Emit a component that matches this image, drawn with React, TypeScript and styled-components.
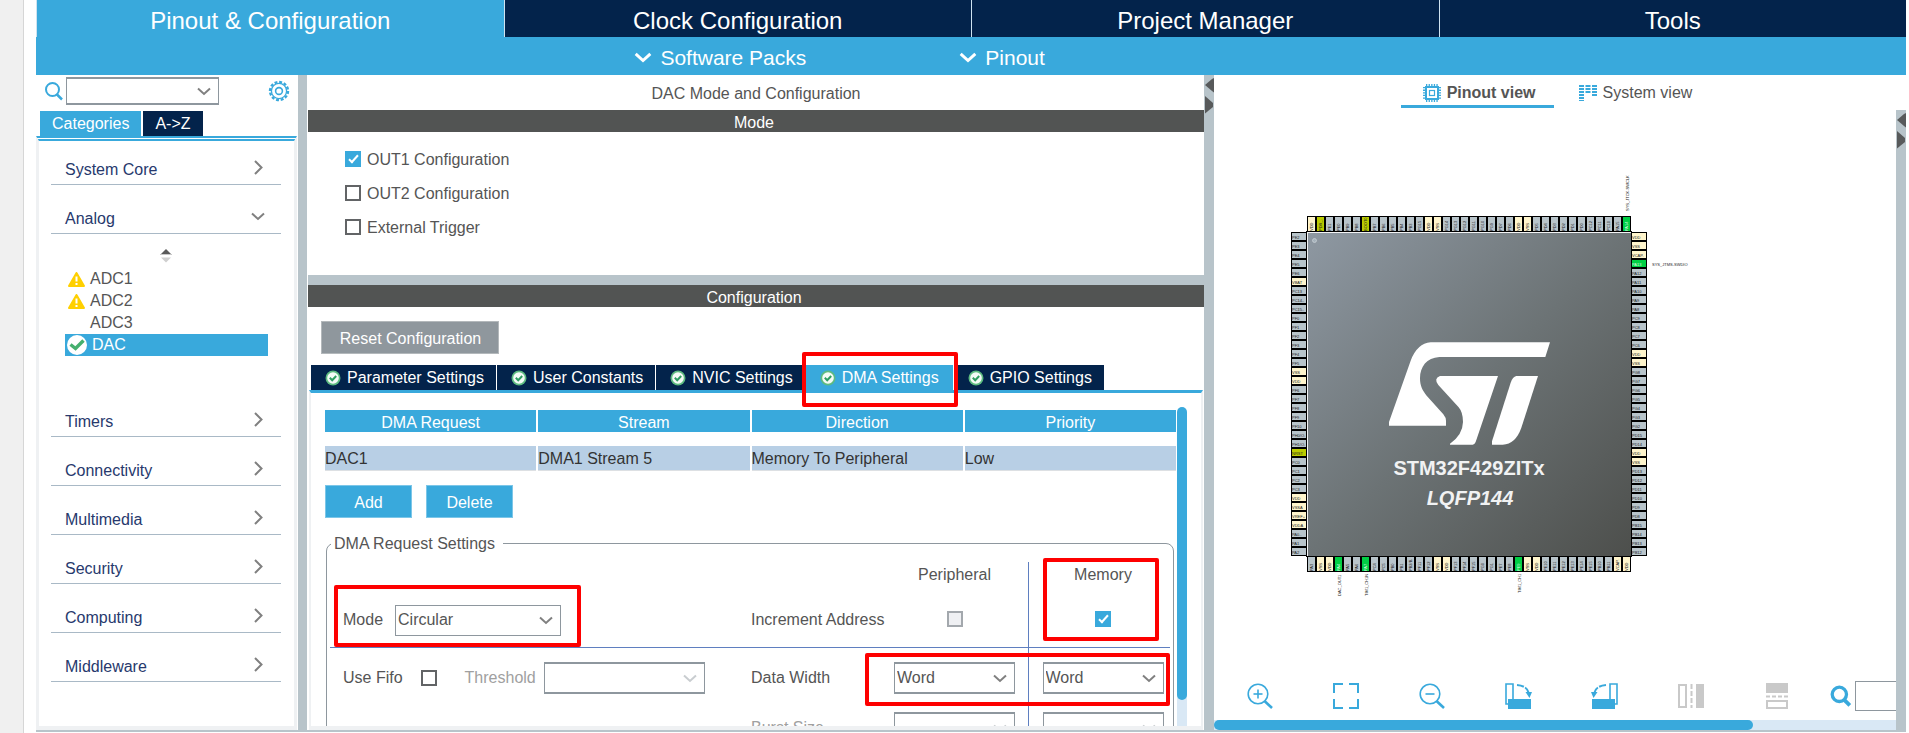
import React from 'react';
import styled, { createGlobalStyle, css } from 'styled-components';

const c = {
  navy: '#03234b',
  blue: '#39a9dc',
  steel: '#b8c4ca',
  slate: '#8e979e',
  dark: '#525453',
  text: '#555555',
  pale: '#eff1f3',
  track: '#d9e8f5',
  rule: '#5f7fc0',
};

const GlobalStyle = createGlobalStyle`
  *, *::before, *::after { box-sizing: border-box; }
  body {
    margin: 0;
    background: #fff;
    color: ${c.text};
    font: 16px/20px "Liberation Sans", Arial, sans-serif;
  }
  button, input, select { font: inherit; color: inherit; margin: 0; }
  button { border: 0; padding: 0; background: none; cursor: pointer; }
`;

/* ---------- frame ---------- */

const Page = styled.div`
  display: flex;
  height: 100vh;
  overflow: hidden;
`;

const Gutter = styled.div`
  flex: 0 0 24px;
  background: #f0f0f0;
  border-right: 1px solid #d6d6d6;
`;

const Shell = styled.div`
  flex: 1;
  min-width: 0;
  display: flex;
  flex-direction: column;
  margin: 0 3px 1px 12px;
`;

const MainTabs = styled.nav`
  display: grid;
  grid-template-columns: repeat(4, 1fr);
  height: 37px;
`;

const MainTab = styled.button<{ $active?: boolean }>`
  background: ${(p) => (p.$active ? c.blue : c.navy)};
  color: #fff;
  font-size: 24px;
  line-height: 28px;
  padding-top: 4px;
  border-left: 1px solid #cfe3f0;
`;

const SubBar = styled.div`
  display: flex;
  align-items: center;
  gap: 153px;
  height: 38px;
  padding-left: 32%;
  background: ${c.blue};
`;

const SubBarButton = styled.button`
  display: flex;
  align-items: center;
  gap: 8px;
  color: #fff;
  font-size: 21px;
  line-height: 24px;
  padding-top: 3px;
`;

const Workspace = styled.main`
  flex: 1;
  min-height: 0;
  display: grid;
  grid-template-columns: 262px 9px minmax(0, 897fr) 10px minmax(0, 692fr);
  border-bottom: 2px solid ${c.steel};
`;

const Splitter = styled.div`
  background: ${c.steel};
`;

/* ---------- shared controls ---------- */

const SelectBox = styled.span<{ $w: number; $h: number; $thick?: boolean }>`
  display: inline-grid;
  align-items: center;
  width: ${(p) => p.$w}px;
  height: ${(p) => p.$h}px;
  border: 1px solid ${c.slate};
  ${(p) => p.$thick && css`border-width: 2px 1px;`}
  background: #fff;

  > * { grid-area: 1 / 1; }
  > svg { justify-self: end; margin-right: 7px; pointer-events: none; }
`;

const NativeSelect = styled.select`
  appearance: none;
  width: 100%;
  height: 100%;
  border: 0;
  padding: 0 24px 0 2px;
  background: transparent;
  outline: none;
  opacity: 1;
`;

const Check = styled.input.attrs({ type: 'checkbox' })`
  appearance: none;
  flex: none;
  display: grid;
  place-items: center;
  width: 16px;
  height: 16px;
  border: 2px solid #626466;
  background: #fff;

  &:checked {
    background: ${c.blue};
    border-color: ${c.blue};
  }
  &:checked::after {
    content: '';
    width: 5px;
    height: 10px;
    border: solid #fff;
    border-width: 0 2px 2px 0;
    transform: translateY(-1px) rotate(42deg);
  }
  &:disabled {
    background: #eff0f3;
    border-color: #a3a8ad;
  }
`;

const Highlight = styled.span<{ $inset: string; $w?: number; $h?: number }>`
  position: absolute;
  z-index: 2;
  inset: ${(p) => p.$inset};
  ${(p) => p.$w && css`width: ${p.$w}px;`}
  ${(p) => p.$h && css`height: ${p.$h}px;`}
  border: 4px solid #fe0000;
  border-radius: 2px;
  pointer-events: none;
`;

const Chevron = ({ color = '#808080', size = 14, weight = 2 }: { color?: string; size?: number; weight?: number }) => (
  <svg width={size} height={size / 2 + 2} viewBox="0 0 14 9" fill="none" stroke={color} strokeWidth={weight}>
    <path d="M1 1.5 L7 7 L13 1.5" />
  </svg>
);

function Dropdown({ id, w, h, options, disabled, thick, label }: {
  id: string; w: number; h: number; options: string[]; disabled?: boolean; thick?: boolean; label?: string;
}) {
  return (
    <SelectBox $w={w} $h={h} $thick={thick}>
      <NativeSelect id={id} disabled={disabled} aria-label={label}>
        {options.map((o) => <option key={o}>{o}</option>)}
      </NativeSelect>
      <Chevron color={disabled ? '#c9cdd0' : '#808080'} />
    </SelectBox>
  );
}

const SearchIcon = ({ size = 20, weight = 2 }: { size?: number; weight?: number }) => (
  <svg width={size} height={size} viewBox="0 0 20 20" fill="none" stroke={c.blue} strokeWidth={weight}>
    <circle cx="8.5" cy="8.5" r="6.5" />
    <path d="M12.5 13 L18 18.5" strokeWidth={weight + 0.5} />
  </svg>
);

/* ---------- sidebar ---------- */

const Sidebar = styled.aside`
  display: flex;
  flex-direction: column;
  min-height: 0;
`;

const SearchRow = styled.div`
  display: flex;
  align-items: center;
  gap: 2px;
  height: 32px;
  padding-left: 8px;
  > button { margin-left: auto; margin-right: 8px; height: 22px; }
`;

const SideTabs = styled.div`
  display: flex;
  gap: 2px;
  height: 29px;
  padding: 4px 0 0 4px;
`;

const SideTab = styled.button<{ $active?: boolean }>`
  background: ${(p) => (p.$active ? c.blue : c.navy)};
  color: #fff;
  height: 25px;
  padding: 0 12px;
`;

const SideBody = styled.div`
  flex: 1;
  min-height: 0;
  overflow: hidden;
  margin-right: 1px;
  border: 3px solid ${c.pale};
  border-top: 5px double ${c.blue};
  border-bottom: 4px solid ${c.pale};
`;

const CategoryList = styled.ul`
  list-style: none;
  margin: 0;
  padding: 8px 13px 0 12px;
  display: flex;
  flex-direction: column;
  gap: 13px;
`;

const CategoryButton = styled.button`
  display: flex;
  align-items: center;
  justify-content: space-between;
  width: 100%;
  height: 36px;
  padding: 6px 16px 0 14px;
  border-bottom: 1px solid #a9b9c6;
  color: #27396d;
  > svg { margin-bottom: 4px; }
`;

const Tree = styled.ul`
  list-style: none;
  margin: 0;
  padding: 0 13px 0 14px;
  height: 154px;
`;

const Sorter = styled.li`
  display: flex;
  justify-content: center;
  height: 34px;
  padding: 14px 2px 0 0;
`;

const TreeButton = styled.button<{ $selected?: boolean }>`
  display: grid;
  grid-template-columns: ${(p) => (p.$selected ? '22px' : '20px')} auto;
  align-items: center;
  column-gap: 4px;
  width: 100%;
  height: 22px;
  padding-left: 1px;
  text-align: left;
  ${(p) => p.$selected && css`background: ${c.blue}; color: #fff;`}
  > svg { justify-self: center; }
`;

const RightChevron = () => (
  <svg width="13" height="15" viewBox="0 0 13 15" fill="none" stroke="#808080" strokeWidth="2">
    <path d="M3 1 L9.5 7.5 L3 14" />
  </svg>
);

const WarningIcon = () => (
  <svg width="17" height="15" viewBox="0 0 17 15">
    <path d="M8.5 1 L16 14 H1 Z" fill="#ffd000" stroke="#ffd000" strokeWidth="2" strokeLinejoin="round" />
    <path d="M8.5 4.5 V9.5 M8.5 11 V13" stroke="#fff" strokeWidth="2" />
  </svg>
);

const OkIcon = ({ size = 16 }: { size?: number }) => (
  <svg width={size} height={size} viewBox="0 0 16 16">
    <circle cx="8" cy="8" r="7.5" fill="#5dbb80" />
    <circle cx="8" cy="8" r="5.8" fill="#f4fbf6" />
    <path d="M4.8 7.8 L7.2 10.2 L11.2 6" fill="none" stroke="#2f9e62" strokeWidth="2" />
  </svg>
);

const BigOkIcon = () => (
  <svg width="22" height="22" viewBox="0 0 22 22">
    <circle cx="11" cy="11" r="10" fill="#fff" />
    <path d="M4.5 10.5 L9.5 14.5 L17.5 6.5" fill="none" stroke="#45b06e" strokeWidth="3.4" />
  </svg>
);

const GearIcon = () => (
  <svg width="22" height="22" viewBox="0 0 22 22" fill="none" stroke={c.blue}>
    <circle cx="11" cy="11" r="9" strokeWidth="2.4" strokeDasharray="2.9 1.8" />
    <circle cx="11" cy="11" r="7.6" strokeWidth="1.3" />
    <circle cx="11" cy="11" r="3.4" strokeWidth="1.6" />
  </svg>
);

const categories = [
  'System Core', 'Analog', 'Timers', 'Connectivity', 'Multimedia', 'Security', 'Computing', 'Middleware',
];

function CategoryPanel() {
  return (
    <Sidebar>
      <SearchRow>
        <SearchIcon />
        <Dropdown id="ip-search" w={153} h={28} options={['']} thick label="Search peripherals" />
        <button aria-label="Settings"><GearIcon /></button>
      </SearchRow>
      <SideTabs>
        <SideTab $active>Categories</SideTab>
        <SideTab>{'A->Z'}</SideTab>
      </SideTabs>
      <SideBody>
        <CategoryList>
          {categories.map((name) => (
            <li key={name}>
              <CategoryButton>
                {name}
                {name === 'Analog' ? <Chevron /> : <RightChevron />}
              </CategoryButton>
              {name === 'Analog' && (
                <Tree>
                  <Sorter>
                    <svg width="12" height="16" viewBox="0 0 12 16">
                      <path d="M6 1 L11 6 H1 Z" fill="#5a5a5a" />
                      <path d="M0 6.5 H12" stroke="#c8c8c8" />
                      <path d="M1 9.5 H11 L6 14.5 Z" fill="#cfcfcf" />
                    </svg>
                  </Sorter>
                  <li><TreeButton><WarningIcon />ADC1</TreeButton></li>
                  <li><TreeButton><WarningIcon />ADC2</TreeButton></li>
                  <li><TreeButton><span />ADC3</TreeButton></li>
                  <li><TreeButton $selected><BigOkIcon />DAC</TreeButton></li>
                </Tree>
              )}
            </li>
          ))}
        </CategoryList>
      </SideBody>
    </Sidebar>
  );
}

/* ---------- mode and configuration ---------- */

const Center = styled.section`
  display: flex;
  flex-direction: column;
  min-height: 0;
  padding-left: 1px;
`;

const CenterTitle = styled.h1`
  margin: 0;
  height: 35px;
  font-size: 16px;
  font-weight: 400;
  line-height: 38px;
  text-align: center;
`;

const SectionBar = styled.h2`
  margin: 0;
  flex: none;
  height: 22px;
  padding-right: 4px;
  background: ${c.dark};
  color: #fff;
  font-size: 16px;
  font-weight: 400;
  line-height: 25px;
  text-align: center;
`;

const ModeList = styled.div`
  flex: none;
  height: 143px;
  padding: 10px 0 0 37px;
`;

const ModeOption = styled.label`
  display: flex;
  align-items: center;
  gap: 6px;
  height: 34px;
  > span { padding-top: 2px; }
`;

const HSplitter = styled.div`
  flex: none;
  height: 10px;
  background: ${c.steel};
`;

const ResetButton = styled.button`
  flex: none;
  align-self: flex-start;
  width: 178px;
  height: 33px;
  margin: 14px 13px 11px;
  padding: 2px 0 0 1px;
  background: #8f979d;
  border: 1px solid #b3b8bb;
  color: #fff;
`;

const ConfigTabs = styled.div`
  flex: none;
  display: flex;
  gap: 1px;
  height: 25px;
  padding-left: 3px;
`;

const ConfigTab = styled.button<{ $active?: boolean }>`
  position: relative;
  display: flex;
  align-items: center;
  gap: 6px;
  height: 25px;
  padding: 0 ${(p) => (p.$active ? 14 : 12)}px 0 14px;
  background: ${(p) => (p.$active ? c.blue : c.navy)};
  color: #fff;
`;

const ConfigPane = styled.div`
  flex: 1;
  min-height: 0;
  display: grid;
  grid-template-columns: minmax(0, 1fr) 10px;
  margin: 0 1px;
  padding: 14px 14px 0 13px;
  border: 2px solid ${c.pale};
  border-top: 3px solid ${c.blue};
  border-bottom-width: 4px;
  overflow: hidden;
`;

const Scrolled = styled.div`
  min-height: 0;
  overflow: hidden;
  padding-top: 3px;
`;

const VTrack = styled.div`
  background: linear-gradient(#fff 50%, ${c.track} 50%);
`;

const VThumb = styled.div`
  height: 92%;
  border-radius: 5px;
  background: ${c.blue};
`;

const DmaTable = styled.table`
  width: calc(100% + 2px);
  table-layout: fixed;
  border-collapse: separate;
  border-spacing: 2px 0;
  margin-left: -1px;

  th {
    height: 22px;
    padding: 3px 0 0;
    background: ${c.blue};
    color: #fff;
    font-weight: 400;
    line-height: 18px;
  }
  tbody::before { content: ''; display: block; height: 14px; }
  td {
    height: 25px;
    padding: 1px 0 0;
    background: #b8cfe5;
    border-bottom: 1px solid #dde0e3;
    color: #333;
  }
`;

const Actions = styled.div`
  display: flex;
  gap: 14px;
  margin: 14px 0 13px 1px;
`;

const ActionButton = styled.button`
  width: 87px;
  height: 33px;
  padding-top: 2px;
  background: ${c.blue};
  border: 1px solid #7cc6e8;
  color: #fff;
`;

const RequestSettings = styled.fieldset`
  margin: 0 3px 0 2px;
  padding: 7px 3px 20px;
  border: 1px solid ${c.slate};
  border-radius: 8px;
  min-width: 0;

  legend {
    margin-left: 1px;
    padding: 2px 8px 0 3px;
    line-height: 22px;
  }
`;

const SettingsRow = styled.div<{ $kind?: 'head' | 'first' }>`
  position: relative;
  display: grid;
  grid-template-columns: minmax(0, 1fr) 143px 134px 142px;
  height: ${(p) => (p.$kind === 'head' ? 36 : 50)}px;
  ${(p) => p.$kind === 'first' && css`border-bottom: 1px solid ${c.rule};`}

  > * {
    padding-top: ${(p) => (p.$kind === 'head' ? 0 : p.$kind === 'first' ? 6 : 14)}px;
  }
`;

const LeftCell = styled.div`
  display: flex;
  align-items: flex-start;
  gap: 28px;
  padding-left: 13px;
`;

const Field = styled.div<{ $gap: number }>`
  position: relative;
  display: inline-flex;
  align-items: center;
  gap: ${(p) => p.$gap}px;
`;

const CellLabel = styled.span<{ $muted?: boolean }>`
  line-height: 32px;
  ${(p) => p.$muted && css`color: #a0a0a0;`}
`;

const FieldLabel = styled.label<{ $muted?: boolean }>`
  line-height: 32px;
  ${(p) => p.$muted && css`color: #a0a0a0;`}
`;

const ValueCell = styled.div<{ $memory?: boolean }>`
  position: relative;
  display: flex;
  justify-content: center;
  align-items: flex-start;
  line-height: 26px;
  padding-right: ${(p) => (p.$memory ? 6 : 13)}px;
  ${(p) => p.$memory && css`border-left: 1px solid ${c.rule}; padding-left: 13px;`}
  > input { margin-top: 7px; }
`;

const configTabs = ['Parameter Settings', 'User Constants', 'NVIC Settings', 'DMA Settings', 'GPIO Settings'];

function ConfigurationPanel() {
  return (
    <Center>
      <CenterTitle>DAC Mode and Configuration</CenterTitle>
      <SectionBar>Mode</SectionBar>
      <ModeList>
        <ModeOption><Check defaultChecked /><span>OUT1 Configuration</span></ModeOption>
        <ModeOption><Check /><span>OUT2 Configuration</span></ModeOption>
        <ModeOption><Check /><span>External Trigger</span></ModeOption>
      </ModeList>
      <HSplitter />
      <SectionBar>Configuration</SectionBar>
      <ResetButton>Reset Configuration</ResetButton>
      <ConfigTabs>
        {configTabs.map((t) => (
          <ConfigTab key={t} $active={t === 'DMA Settings'}>
            <OkIcon />
            {t}
            {t === 'DMA Settings' && <Highlight $inset="-13px -5px -17px -4px" />}
          </ConfigTab>
        ))}
      </ConfigTabs>
      <ConfigPane>
        <Scrolled>
          <DmaTable>
            <thead>
              <tr><th>DMA Request</th><th>Stream</th><th>Direction</th><th>Priority</th></tr>
            </thead>
            <tbody>
              <tr><td>DAC1</td><td>DMA1 Stream 5</td><td>Memory To Peripheral</td><td>Low</td></tr>
            </tbody>
          </DmaTable>
          <Actions>
            <ActionButton>Add</ActionButton>
            <ActionButton>Delete</ActionButton>
          </Actions>
          <RequestSettings>
            <legend>DMA Request Settings</legend>
            <SettingsRow $kind="head">
              <span />
              <span />
              <ValueCell>Peripheral</ValueCell>
              <ValueCell $memory>
                Memory
                <Highlight $inset="-4px auto auto 14px" $w={116} $h={83} />
              </ValueCell>
            </SettingsRow>
            <SettingsRow $kind="first">
              <LeftCell>
                <Field $gap={12}>
                  <FieldLabel htmlFor="mode">Mode</FieldLabel>
                  <Dropdown id="mode" w={166} h={31} options={['Circular', 'Normal']} />
                  <Highlight $inset="-19px -20px -11px -9px" />
                </Field>
              </LeftCell>
              <CellLabel>Increment Address</CellLabel>
              <ValueCell><Check disabled aria-label="Increment peripheral address" /></ValueCell>
              <ValueCell $memory><Check defaultChecked aria-label="Increment memory address" /></ValueCell>
            </SettingsRow>
            <SettingsRow>
              <LeftCell>
                <Field $gap={18}>
                  <FieldLabel htmlFor="fifo">Use Fifo</FieldLabel>
                  <Check id="fifo" />
                </Field>
                <Field $gap={8}>
                  <FieldLabel htmlFor="threshold" $muted>Threshold</FieldLabel>
                  <Dropdown id="threshold" w={161} h={32} options={['']} disabled thick />
                </Field>
              </LeftCell>
              <CellLabel>Data Width</CellLabel>
              <ValueCell>
                <Dropdown id="pw" w={121} h={32} options={['Word', 'Half Word', 'Byte']} thick label="Peripheral data width" />
              </ValueCell>
              <ValueCell $memory>
                <Dropdown id="mw" w={121} h={32} options={['Word', 'Half Word', 'Byte']} thick label="Memory data width" />
              </ValueCell>
              <Highlight $inset="5px 0 auto auto" $w={305} $h={53} />
            </SettingsRow>
            <SettingsRow>
              <LeftCell />
              <CellLabel $muted>Burst Size</CellLabel>
              <ValueCell>
                <Dropdown id="pb" w={121} h={32} options={['']} disabled thick label="Peripheral burst size" />
              </ValueCell>
              <ValueCell $memory>
                <Dropdown id="mb" w={121} h={32} options={['']} disabled thick label="Memory burst size" />
              </ValueCell>
            </SettingsRow>
          </RequestSettings>
        </Scrolled>
        <VTrack><VThumb /></VTrack>
      </ConfigPane>
    </Center>
  );
}

/* ---------- pinout view ---------- */

const Right = styled.section`
  display: flex;
  flex-direction: column;
  min-height: 0;
`;

const ViewTabs = styled.div`
  display: flex;
  justify-content: center;
  gap: 17px;
  height: 35px;
  padding: 0 9px 2px 0;
`;

const ViewTab = styled.button<{ $active?: boolean }>`
  display: flex;
  align-items: center;
  gap: 6px;
  height: 33px;
  padding: 6px 18px 0 ${(p) => (p.$active ? 22 : 8)}px;
  border-bottom: 3px solid ${(p) => (p.$active ? c.blue : 'transparent')};
  font-weight: ${(p) => (p.$active ? 700 : 400)};
`;

const ViewBody = styled.div`
  flex: 1;
  min-height: 0;
  display: grid;
  grid-template-columns: minmax(0, 1fr) 10px;
`;

const Canvas = styled.div`
  display: flex;
  flex-direction: column;
  min-height: 0;
  overflow: hidden;
`;

const ChipArea = styled.div`
  flex: 1;
  min-height: 0;
  overflow: hidden;
  padding: 60px 0 0 66px;
  > svg { display: block; }
`;

const Toolbar = styled.div`
  flex: none;
  display: grid;
  grid-template-columns: repeat(7, minmax(0, 86fr)) minmax(0, 76fr);
  align-items: center;
  height: 30px;
  margin-bottom: 9px;
  padding-left: 3px;
`;

const ToolButton = styled.button`
  display: flex;
  justify-content: center;
  height: 26px;
`;

const PinSearch = styled.label`
  display: flex;
  align-items: center;
  gap: 3px;
  padding-left: 10px;
  overflow: hidden;

  svg { flex: none; }
  input {
    flex: 1 0 120px;
    width: 120px;
    height: 30px;
    border: 1px solid ${c.slate};
    border-radius: 0;
    outline: none;
    background: #fff;
  }
`;

const HTrack = styled.div`
  flex: none;
  height: 10px;
  background: ${c.track};
`;

const HThumb = styled.div`
  width: 79%;
  height: 10px;
  border-radius: 5px;
  background: ${c.blue};
`;

const SplitArrows = () => (
  <svg width="10" height="40" viewBox="0 0 10 40" fill="#585a5b">
    <path d="M10 3 L8 4 L1 10 L8 16 L10 17.500 Z" />
    <path d="M1 21 L9 28 V32 L1 38.500 Z" />
  </svg>
);

const range = (port: string, from: number, to: number) => {
  const step = from < to ? 1 : -1;
  const out: string[] = [];
  for (let n = from; n !== to + step; n += step) out.push(port + n);
  return out;
};

const leftPins = [
  ...range('PE', 2, 6), 'VBAT', 'PC13', 'PC14..', 'PC15..', ...range('PF', 0, 5), 'VSS', 'VDD',
  ...range('PF', 6, 10), 'PH0/O.', 'PH1/O.', 'NRST', ...range('PC', 0, 3), 'VDD', 'VSSA', 'VREF+', 'VDDA',
  'PA0..', 'PA1', 'PA2',
];
const bottomPins = [
  'PA3', 'VSS', 'VDD', 'PA4', 'PA5', 'PA6', 'PA7', 'PC4', 'PC5', 'PB0', 'PB1', 'PB2/B.', 'PF11', 'PF12',
  'VSS', 'VDD', 'PF13', 'PF14', 'PF15', 'PG0', 'PG1', 'PE7', 'PE8', 'PE9', 'VSS', 'VDD', ...range('PE', 10, 15),
  'PB10', 'PB11', 'VCAP.', 'VDD',
];
const rightPins = [
  'VDD', 'VSS', 'VCAP.', ...range('PA', 13, 8), ...range('PC', 9, 6), 'VDD', 'VSS', ...range('PG', 8, 2),
  'PD15', 'PD14', 'VDD', 'VSS', ...range('PD', 13, 8), ...range('PB', 15, 12),
];
const topPins = [
  'VDD', 'PDR_.', 'PE1', 'PE0', 'PB9', 'PB8', 'BOOT0', ...range('PB', 7, 3), 'PG15', 'VDD', 'VSS',
  ...range('PG', 14, 9), 'PD7', 'PD6', 'VDD', 'VSS', ...range('PD', 5, 0), 'PC12', 'PC11', 'PC10', 'PA15', 'PA14',
];

const assigned = ['PA4', 'PA7', 'PE9', 'PA13', 'PA14'];

const pinColor = (name: string) => {
  if (assigned.includes(name)) return '#00cf45';
  if (name === 'NRST' || name === 'BOOT0' || name.startsWith('PDR')) return '#bbcc00';
  if (name.startsWith('V')) return '#fff5cc';
  return '#b8c4ca';
};

const PinText = styled.text<{ $on?: boolean }>`
  font: 4px "Liberation Sans", Arial, sans-serif;
  fill: ${(p) => (p.$on ? '#d8ffe2' : '#222')};
`;

const ChipName = styled.text<{ $italic?: boolean }>`
  font: ${(p) => (p.$italic ? 'italic' : 'normal')} bold 20px "Liberation Sans", Arial, sans-serif;
  fill: #f1f2f3;
  text-anchor: middle;
`;

function HPin({ name, x, y }: { name: string; x: number; y: number }) {
  return (
    <g>
      <rect x={x} y={y} width="16" height="9" />
      <rect x={x + 1} y={y + 1} width="14" height="7" fill={pinColor(name)} />
      <PinText x={x + 1} y={y + 7} $on={assigned.includes(name)}>{name}</PinText>
    </g>
  );
}

function VPin({ name, x, y }: { name: string; x: number; y: number }) {
  return (
    <g>
      <rect x={x} y={y} width="9" height="16" />
      <rect x={x + 1} y={y + 1} width="7" height="14" fill={pinColor(name)} />
      <PinText transform={`translate(${x + 6} ${y + 15}) rotate(-90)`} $on={assigned.includes(name)}>{name}</PinText>
    </g>
  );
}

function Chip() {
  return (
    <svg width="420" height="440" viewBox="0 0 420 440" role="img" aria-label="STM32F429ZITx LQFP144 pinout">
      <defs>
        <linearGradient id="die" x1="0" y1="0" x2="1" y2="1">
          <stop offset="0" stopColor="#8e98a2" />
          <stop offset="0.5" stopColor="#6c7375" />
          <stop offset="1" stopColor="#4d4f4c" />
        </linearGradient>
      </defs>
      {topPins.map((n, i) => <VPin key={i} name={n} x={27 + i * 9} y={46} />)}
      {bottomPins.map((n, i) => <VPin key={i} name={n} x={27 + i * 9} y={386} />)}
      {leftPins.map((n, i) => <HPin key={i} name={n} x={11} y={62 + i * 9} />)}
      {rightPins.map((n, i) => <HPin key={i} name={n} x={351} y={62 + i * 9} />)}
      <rect x="26" y="61" width="326" height="326" />
      <rect x="27" y="62" width="324" height="324" fill="#f2f3f4" />
      <rect x="28" y="63" width="323" height="323" fill="url(#die)" />
      <circle cx="34.500" cy="70.500" r="2" fill="#a6b2bb" stroke="#d5dce0" strokeWidth="0.6" />
      <g transform="scale(0.33333)" fill="#fff">
        <path d="M810 517 L796 561 H478 C440 563 420 590 420 625 C420 648 428 662 440 677 L490 733 Q498 743 498 752 V767 H327 V756 L392 572 Q412 520 452 517 Z" />
        <path d="M480 618 H654 L589 810 Q585 824 578 824 H510 V821 Q548 795 549 756 Q549 727 536 712 L475 645 Q460 625 480 618 Z" />
        <path d="M709 618 H774 L724 773 Q707 822 668 824 H636 V814 L692 638 Q698 620 709 618 Z" />
      </g>
      <ChipName x="189" y="305">STM32F429ZITx</ChipName>
      <ChipName x="190" y="335" $italic>LQFP144</ChipName>
      <PinText x="372" y="96">SYS_JTMS-SWDIO</PinText>
      <PinText transform="translate(349 41) rotate(-90)">SYS_JTCK-SWCLK</PinText>
      <PinText transform="translate(61 426) rotate(-90)">DAC_OUT1</PinText>
      <PinText transform="translate(88 426) rotate(-90)">TIM1_CH1N</PinText>
      <PinText transform="translate(241 423) rotate(-90)">TIM1_CH1</PinText>
    </svg>
  );
}

const Magnifier = ({ plus }: { plus?: boolean }) => (
  <svg width="26" height="26" viewBox="0 0 26 26" fill="none" stroke={c.blue} strokeWidth="1.6">
    <circle cx="11" cy="11" r="9.800" />
    <path d="M6.500 11 H15.500" />
    {plus && <path d="M11 6.500 V15.500" />}
    <path d="M17.500 18 L25 25" strokeWidth="2.6" />
  </svg>
);

const FitIcon = () => (
  <svg width="26" height="26" viewBox="0 0 26 26" fill="none" stroke={c.blue} strokeWidth="2">
    <path d="M1 10 V1 H10 M16 1 H25 V10 M25 16 V25 H16 M10 25 H1 V16" />
  </svg>
);

const RotateIcon = ({ flip }: { flip?: boolean }) => (
  <svg width="27" height="26" viewBox="0 0 27 26" fill="none" stroke={c.blue} strokeWidth="1.6">
    <g transform={flip ? 'translate(27 0) scale(-1 1)' : undefined}>
      <path d="M3 21 H1 V1 H8 V16" />
      <rect x="3" y="16" width="23" height="10" fill={c.blue} stroke="none" />
      <path d="M12 2 Q23 3 24 11" strokeWidth="2" strokeDasharray="7 1.500" />
      <path d="M20.500 9 H27 L24.500 15 Z" fill={c.blue} stroke="none" />
    </g>
  </svg>
);

const MirrorIcon = ({ vertical }: { vertical?: boolean }) => (
  <svg width="26" height="26" viewBox="0 0 26 26" fill="none" stroke="#c9c9c9" strokeWidth="2">
    {vertical ? (
      <>
        <rect x="2" y="0" width="22" height="10" fill="#c9c9c9" stroke="none" />
        <path d="M2 13.500 H24" strokeDasharray="4 2" />
        <rect x="3" y="18" width="20" height="7" />
      </>
    ) : (
      <>
        <rect x="1" y="2" width="7" height="22" />
        <path d="M13.500 1 V25" strokeDasharray="5 2" />
        <rect x="18" y="1" width="8" height="24" fill="#c9c9c9" stroke="none" />
      </>
    )}
  </svg>
);

const ChipIcon = () => (
  <svg width="18" height="18" viewBox="0 0 18 18" fill="none" stroke={c.blue}>
    <rect x="3" y="3" width="12" height="12" strokeWidth="2" />
    <rect x="6.500" y="6.500" width="5" height="5" strokeWidth="1.200" />
    <path d="M3 1 H15 M3 17 H15" strokeWidth="2" strokeDasharray="1.300 1.300" />
    <path d="M1 3 V15 M17 3 V15" strokeWidth="2" strokeDasharray="1.300 1.300" />
  </svg>
);

const SystemIcon = () => (
  <svg width="18" height="18" viewBox="0 0 18 18" fill="none" stroke={c.blue} strokeDasharray="2 1" strokeWidth="5">
    <path d="M2.500 1 V17" />
    <path d="M9 1 V9" />
    <path d="M15.500 1 V12" />
  </svg>
);

function PinoutPanel() {
  return (
    <Right>
      <ViewTabs>
        <ViewTab $active><ChipIcon />Pinout view</ViewTab>
        <ViewTab><SystemIcon />System view</ViewTab>
      </ViewTabs>
      <ViewBody>
        <Canvas>
          <ChipArea><Chip /></ChipArea>
          <Toolbar>
            <ToolButton aria-label="Zoom in"><Magnifier plus /></ToolButton>
            <ToolButton aria-label="Best fit"><FitIcon /></ToolButton>
            <ToolButton aria-label="Zoom out"><Magnifier /></ToolButton>
            <ToolButton aria-label="Rotate clockwise"><RotateIcon /></ToolButton>
            <ToolButton aria-label="Rotate counter-clockwise"><RotateIcon flip /></ToolButton>
            <ToolButton aria-label="Mirror horizontally"><MirrorIcon /></ToolButton>
            <ToolButton aria-label="Mirror vertically"><MirrorIcon vertical /></ToolButton>
            <PinSearch>
              <SearchIcon size={22} weight={3} />
              <input type="text" aria-label="Find pin" />
            </PinSearch>
          </Toolbar>
          <HTrack><HThumb /></HTrack>
        </Canvas>
        <Splitter><SplitArrows /></Splitter>
      </ViewBody>
    </Right>
  );
}

/* ---------- app ---------- */

export default function App() {
  return (
    <>
      <GlobalStyle />
      <Page>
        <Gutter />
        <Shell>
          <MainTabs>
            <MainTab $active>Pinout &amp; Configuration</MainTab>
            <MainTab>Clock Configuration</MainTab>
            <MainTab>Project Manager</MainTab>
            <MainTab>Tools</MainTab>
          </MainTabs>
          <SubBar>
            <SubBarButton><Chevron color="#fff" size={18} weight={2.4} />Software Packs</SubBarButton>
            <SubBarButton><Chevron color="#fff" size={18} weight={2.4} />Pinout</SubBarButton>
          </SubBar>
          <Workspace>
            <CategoryPanel />
            <Splitter />
            <ConfigurationPanel />
            <Splitter><SplitArrows /></Splitter>
            <PinoutPanel />
          </Workspace>
        </Shell>
      </Page>
    </>
  );
}
